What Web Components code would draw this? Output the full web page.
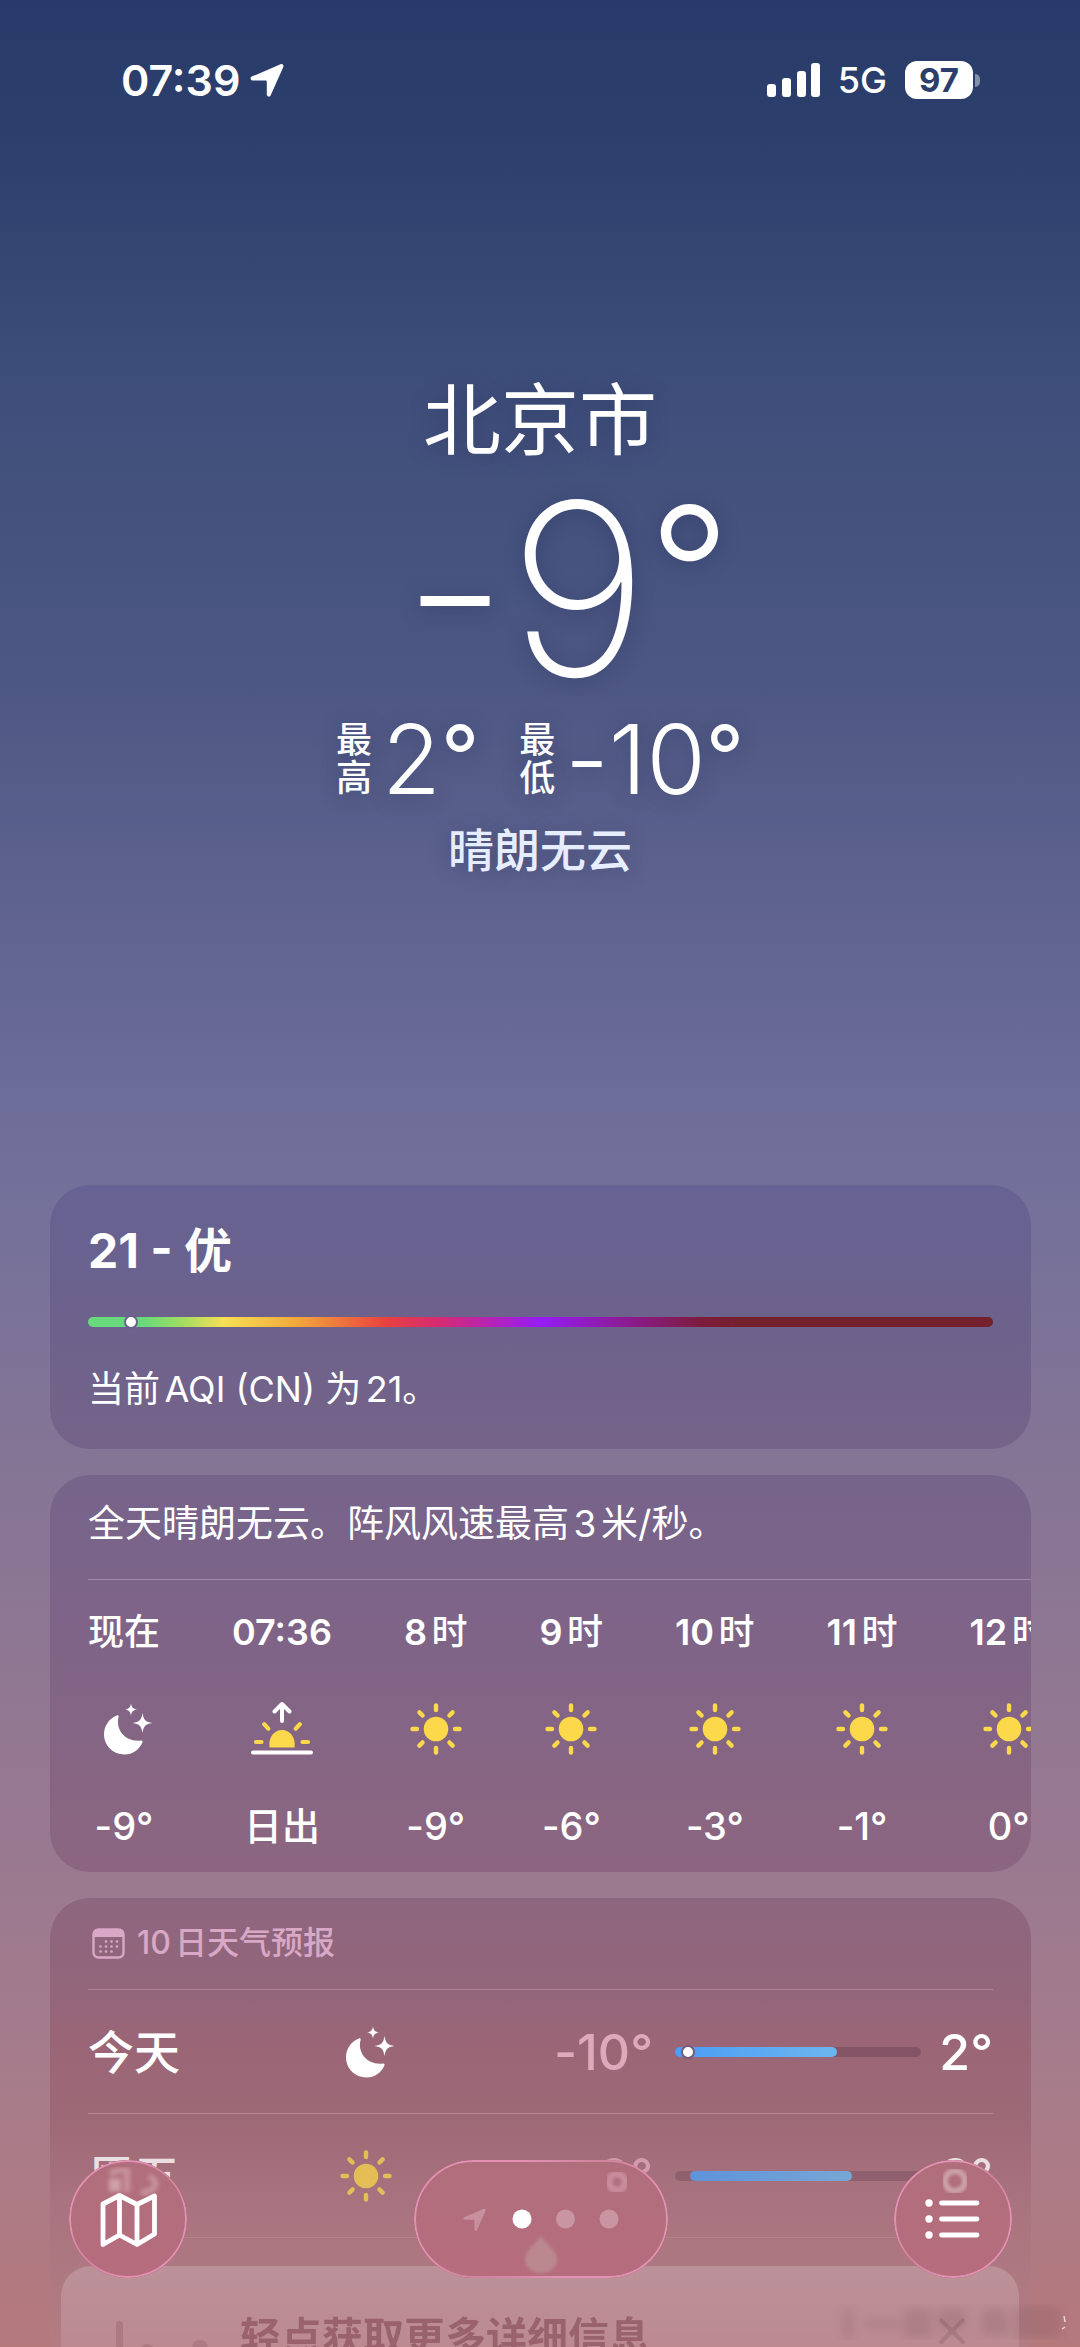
<!DOCTYPE html>
<html lang="zh-CN">
<head>
<meta charset="utf-8">
<meta name="viewport" content="width=device-width, initial-scale=1">
<title>天气</title>
<style>
html, body { margin: 0; height: 100%; }
body {
  overflow: hidden;
  color: #fff;
  font-family: Inter, "Noto Sans CJK SC", sans-serif;
  background: #283b69;
}
</style>
</head>
<body>
<weather-app></weather-app>
<script>
const define = (name, html, setup) => customElements.define(name, class extends HTMLElement {
  connectedCallback() {
    if (this.shadowRoot) return;
    const root = this.attachShadow({ mode: 'open' });
    root.innerHTML = html;
    if (setup) setup(this, root);
  }
});

const ARROW = '<path d="M30.5 1.2c1.8-.8 3.6.9 2.8 2.8L20.6 32.4c-.9 2-3.8 1.400-3.800-.800V18.800c0-.900-.500-1.400-1.400-1.400H2.600c-2.200 0-2.800-2.900-.800-3.800z"/>';
const rays = (a) => a.map(d => `<line x1="28" y1="4.500" x2="28" y2="9" transform="rotate(${d} 28 28)"/>`).join('');
const ICONS = {
  sun: `<svg viewBox="0 0 56 56"><circle cx="28" cy="28" r="12.300" fill="#fbd94b"/><g stroke="#fbd94b" stroke-width="4.400" stroke-linecap="round">${rays([0,45,90,135,180,225,270,315])}</g></svg>`,
  moon: `<svg viewBox="-4 0 56 56" fill="#fff"><path d="M17 14.500c1-.5 2 .3 1.600 1.500C15 29 26 41.500 41 39.500c1.200-.2 2 .9 1.400 1.900C39 49 32.500 53.400 24.500 53.400 13 53.400 4 44.500 4 33.200 4 25 9 17.500 17 14.500z"/><path d="M31 2.500c.8 4.200 1.800 5.200 6 6-4.200.8-5.200 1.800-6 6-.8-4.200-1.800-5.200-6-6 4.200-.8 5.200-1.800 6-6z"/><path d="M42.500 12c1.300 7.200 2.800 8.700 10 10-7.200 1.300-8.700 2.800-10 10-1.300-7.200-2.800-8.700-10-10 7.200-1.300 8.700-2.800 10-10z"/></svg>`,
  sunrise: `<svg viewBox="0 0 64 56"><path d="M19.500 46.500C18 36 24.500 29 32 29s14 7 12.500 17.500z" fill="#fbd94b"/><g stroke="#fbd94b" stroke-width="4.200" stroke-linecap="round"><path d="M6 41h5.500M52.500 41H58M14.200 23.200l4 4.500M49.800 23.200l-4 4.500"/></g><g stroke="#fff" stroke-width="4" stroke-linecap="round" stroke-linejoin="round" fill="none"><path d="M32 20V4M24.500 10.500L32 3l7.500 7.500M3 51.500h58"/></g></svg>`
};

define('weather-icon', `<style>
:host { display: block; width: 56px; height: 56px; }
:host([name=sunrise]) { width: 64px; }
svg { display: block; width: 100%; height: 100%; overflow: visible; }
</style>`, (el, root) => { root.innerHTML += ICONS[el.getAttribute('name')]; });

define('status-bar', `<style>
:host { display: flex; align-items: center; justify-content: space-between; height: 160px; padding: 0 100px 0 121px; box-sizing: border-box; }
.side { display: flex; align-items: center; }
time { font-size: 43px; font-weight: 600; line-height: 48px; }
.loc { width: 34px; height: 34px; margin-left: 10px; fill: #fff; }
.sig { width: 54px; height: 36px; margin-right: 17px; fill: #fff; }
.net { font-size: 36px; font-weight: 500; line-height: 48px; margin-right: 18px; }
.bat { width: 68px; height: 38px; border-radius: 12px; background: #fff; color: #2c3f6c; font-size: 33px; font-weight: 700; line-height: 38px; text-align: center; }
.tip { width: 5px; height: 13px; margin-left: 2px; border-radius: 0 6px 6px 0; background: #8390ac; }
</style>
<div class="side"><time>07:39</time><svg class="loc" viewBox="0 0 34 34">${ARROW}</svg></div>
<div class="side">
<svg class="sig" viewBox="0 0 54 36"><rect y="22" width="9" height="13" rx="3"/><rect x="15" y="16" width="9" height="19" rx="3"/><rect x="30" y="9" width="9" height="26" rx="3"/><rect x="44" y="1" width="9" height="34" rx="3"/></svg>
<span class="net">5G</span><span class="bat">97</span><span class="tip"></span></div>`);

define('current-weather', `<style>
:host { display: flex; flex-direction: column; align-items: center; padding-top: 213px; height: 812px; text-shadow: 0 3px 20px rgba(30,40,80,.35); font-feature-settings: "calt" 0; }
h1 { margin: 0; font-size: 78px; font-weight: 400; line-height: 96px; }
.now { font-size: 240px; font-weight: 250; line-height: 240px; padding-left: 52px; }
.now small { font-size: 180px; font-weight: 300; line-height: 0; vertical-align: 40px; }
.range { display: flex; gap: 40px; margin-top: 2px; }
.pair { display: flex; align-items: center; gap: 10px; }
.lab { width: 36px; font-size: 36px; font-weight: 500; line-height: 38px; }
.deg { font-size: 96px; font-weight: 300; line-height: 96px; }
.deg small { font-size: 84px; font-weight: 400; line-height: 0; vertical-align: 8px; }
.cond { margin: 15px 0 0; font-size: 46px; font-weight: 500; line-height: 56px; color: #e6edff; }
</style>
<h1>北京市</h1>
<div class="now">-9<small>°</small></div>
<div class="range">
<div class="pair"><span class="lab">最高</span><span class="deg">2<small>°</small></span></div>
<div class="pair"><span class="lab">最低</span><span class="deg">-10<small>°</small></span></div>
</div>
<p class="cond">晴朗无云</p>`);

define('air-card', `<style>
:host { display: block; padding: 36px 38px; border-radius: 40px; background: linear-gradient(#666293, #6c628c 50%, #766389); }
h2 { margin: 0 0 36px; font-size: 48px; font-weight: 700; line-height: 60px; }
.scale { position: relative; height: 10px; border-radius: 5px; background: linear-gradient(90deg, #68d97c 0%, #68d97c 6%, #9add63 10%, #f8df55 15%, #f2a93c 23%, #e9403f 33%, #d62a75 39%, #951df5 50%, #8b1b8d 60%, #7c1c3a 68%, #74202d 72%, #74202d 100%); }
.scale i { position: absolute; left: 4%; top: -2px; width: 10px; height: 10px; border: 2px solid #67618e; border-radius: 50%; background: #fff; }
p { margin: 38px 0 0; font-size: 36px; line-height: 48px; text-autospace: normal; }
</style>
<h2>21 - 优</h2><div class="scale"><i></i></div><p>当前AQI (CN) 为21。</p>`);

define('hour-item', `<style>
:host { display: flex; flex-direction: column; align-items: center; flex: none; gap: 45px; line-height: 48px; white-space: nowrap; }
.t { font-size: 36px; font-weight: 600; text-autospace: normal; }
.t span { font-weight: 500; }
.v { font-size: 38px; font-weight: 500; font-feature-settings: "calt" 0; }
</style><span class="t"></span><slot></slot><span class="v"></span>`, (el, root) => {
  root.querySelector('.t').innerHTML = el.getAttribute('time').replace(/[^\d:]+/, m => `<span>${m}</span>`);
  root.querySelector('.v').textContent = el.getAttribute('value');
});

define('hourly-card', `<style>
:host { display: block; padding: 25px 0 22px 38px; border-radius: 40px; overflow: hidden; background: linear-gradient(#76648b, #7f6487 40%, #8c6680); }
p { margin: 0 0 31px; font-size: 37px; line-height: 48px; text-autospace: normal; }
.row { display: flex; gap: 72px; padding-top: 28px; border-top: 1px solid rgba(255,235,255,.27); }
</style>
<p>全天晴朗无云。阵风风速最高3米/秒。</p>
<div class="row">
<hour-item time="现在" value="-9°"><weather-icon name="moon"></weather-icon></hour-item>
<hour-item time="07:36" value="日出"><weather-icon name="sunrise"></weather-icon></hour-item>
<hour-item time="8时" value="-9°"><weather-icon name="sun"></weather-icon></hour-item>
<hour-item time="9时" value="-6°"><weather-icon name="sun"></weather-icon></hour-item>
<hour-item time="10时" value="-3°"><weather-icon name="sun"></weather-icon></hour-item>
<hour-item time="11时" value="-1°"><weather-icon name="sun"></weather-icon></hour-item>
<hour-item time="12时" value="0°"><weather-icon name="sun"></weather-icon></hour-item>
</div>`);

define('day-row', `<style>
:host { display: grid; grid-template-columns: 250px 56px 1fr 246px 72px; align-items: center; height: 123px; border-top: 1px solid rgba(255,225,240,.25); font-size: 50px; font-weight: 500; line-height: 60px; font-feature-settings: "calt" 0; }
:host([dim]) > *, :host([dim]) ::slotted(*) { opacity: .74; }
.day { font-size: 46px; }
.lo { text-align: right; color: #dfa9bc; margin-right: 22px; }
.hi { white-space: nowrap; justify-self: end; }
.bar { position: relative; height: 10px; border-radius: 5px; background: rgba(70,40,60,.28); }
.fill { position: absolute; top: 0; bottom: 0; border-radius: 5px; background: linear-gradient(90deg, #4b9df6, #6cb6ee); }
:host([dim]) .day, :host([dim]) .lo, :host([dim]) .bar, :host([dim]) .hi { opacity: .78; }
.dot { position: absolute; left: 6px; top: -2px; width: 10px; height: 10px; border: 2px solid #7a5a78; border-radius: 50%; background: #fff; }
</style><span class="day"></span><slot></slot><span class="lo"></span><div class="bar"><div class="fill"></div></div><span class="hi"></span>`, (el, root) => {
  const get = n => el.getAttribute(n);
  root.querySelector('.day').textContent = get('day');
  root.querySelector('.lo').textContent = get('low');
  root.querySelector('.hi').textContent = get('high');
  const fill = root.querySelector('.fill');
  fill.style.left = get('from') + '%';
  fill.style.right = (100 - get('to')) + '%';
  if (el.hasAttribute('current')) {
    const dot = document.createElement('div');
    dot.className = 'dot';
    root.querySelector('.bar').append(dot);
  }
});

define('daily-card', `<style>
:host { display: block; padding: 25px 38px 40px; border-radius: 40px; background: linear-gradient(#8d667f 0, #93667b 90px, #9a6677 140px, #9e6976 220px, #a8737f 300px, #b07a82 400px, #b47c82 460px); }
h2 { display: flex; align-items: center; gap: 12px; margin: 0 0 26px; padding-left: 4px; font-size: 32px; font-weight: 500; line-height: 40px; color: #d9a8c6; text-autospace: normal; }
svg { width: 33px; height: 31px; }
.end { border-top: 1px solid rgba(255,225,240,.1); height: 124px; }
</style>
<h2><svg viewBox="0 0 33 31"><rect x="1.500" y="1.500" width="30" height="28" rx="5" fill="none" stroke="#d9a8c6" stroke-width="2.400"/><path d="M1 9V6.500Q1 1 6.500 1h20Q32 1 32 6.500V9z" fill="#d9a8c6"/><g fill="#d9a8c6"><circle cx="14" cy="13.500" r="1.300"/><circle cx="19.500" cy="13.500" r="1.300"/><circle cx="25" cy="13.500" r="1.300"/><circle cx="8.500" cy="18.500" r="1.300"/><circle cx="14" cy="18.500" r="1.300"/><circle cx="19.500" cy="18.500" r="1.300"/><circle cx="25" cy="18.500" r="1.300"/><circle cx="8.500" cy="23.500" r="1.300"/><circle cx="14" cy="23.500" r="1.300"/><circle cx="19.500" cy="23.500" r="1.300"/></g></svg><span>10日天气预报</span></h2>
<day-row day="今天" low="-10°" high="2°" from="0" to="66" current><weather-icon name="moon"></weather-icon></day-row>
<day-row day="周五" low="-9°" high="3°" from="6" to="72" dim><weather-icon name="sun"></weather-icon></day-row>
<div class="end"></div>`);

define('tip-banner', `<style>
:host { position: fixed; left: 61px; right: 61px; bottom: -59px; height: 140px; box-sizing: border-box; padding: 46px 52px 0 48px; display: flex; align-items: flex-start; border-radius: 30px; background: linear-gradient(rgba(187,146,153,.98), rgba(188,138,145,.98) 81px); color: #99626d; }
.pic { width: 110px; height: 60px; margin: 6px 21px 0 0; }
.text { flex: 1; font-size: 41px; font-weight: 700; line-height: 50px; white-space: nowrap; }
button { border: 0; padding: 0; margin-top: 4px; background: none; width: 30px; height: 30px; }
button svg { display: block; }
</style>
<svg class="pic" viewBox="0 0 110 60" fill="#ad7a84"><rect x="7" y="3" width="7" height="60" rx="3.500"/><circle cx="38" cy="33" r="7"/><circle cx="91" cy="30" r="8"/></svg>
<span class="text">轻点获取更多详细信息</span>
<button aria-label="关闭"><svg width="30" height="30" viewBox="0 0 30 30" stroke="#a97b84" stroke-width="4" stroke-linecap="round"><path d="M4 4l22 22M26 4L4 26"/></svg></button>`);

define('bottom-bar', `<style>
:host { position: fixed; left: 69px; right: 68px; bottom: 69px; display: flex; justify-content: space-between; }
button, nav { position: relative; box-sizing: border-box; height: 118px; border: 0; padding: 0; border-radius: 59px; overflow: hidden; background: linear-gradient(#b06e7c, #b66d7e); color: #fff; }
button::after, nav::after { content: ""; position: absolute; inset: 0; border-radius: 59px; border: 2px solid #e391b4; box-sizing: border-box; mask: linear-gradient(135deg, #000 30%, rgba(0,0,0,.6) 50%, #000 70%); }
button { width: 118px; }
nav { width: 254px; }
svg { display: block; }
</style>
<button aria-label="地图"><svg width="118" height="118" viewBox="0 0 118 118"><defs><filter id="b1"><feGaussianBlur stdDeviation="2.200"/></filter></defs>
<g filter="url(#b1)" fill="none" stroke="#cfa0a7" stroke-width="6"><path d="M41 14c7-5 14-4 20-3M58 12v20M80 16c10 6 9 14-8 17" opacity=".75"/><path d="M40 25h12" stroke-width="13"/></g>
<g fill="none" stroke="#fff" stroke-width="4.800" stroke-linejoin="round"><path d="M34 44L50.500 35.500l17.500 9 17.500-8.500V74L68 84.500 50.500 75 34 84.500zM50.500 36v39M68 45v39"/></g></svg></button>
<nav aria-label="位置"><svg width="254" height="118" viewBox="0 0 254 118"><defs><filter id="b2"><feGaussianBlur stdDeviation="1.800"/></filter></defs>
<path d="M127 76c-5 8-16 15-16 23a16 14 0 0 0 32 0c0-8-11-15-16-23z" fill="#bb8890" filter="url(#b2)"/>
<circle cx="203" cy="22" r="8" fill="none" stroke="#c98c9b" stroke-width="7" filter="url(#b2)"/>
<g transform="translate(49 48) scale(.68)" fill="#c8909e">${ARROW}</g>
<circle cx="108" cy="59" r="9.500" fill="#fff"/><circle cx="151.500" cy="59" r="9.500" fill="#c995a2"/><circle cx="195" cy="59" r="9.500" fill="#c995a2"/></svg></nav>
<button aria-label="列表"><svg width="118" height="118" viewBox="0 0 118 118"><defs><filter id="b3"><feGaussianBlur stdDeviation="1.800"/></filter></defs>
<circle cx="61" cy="21" r="10" fill="none" stroke="#cba0a7" stroke-width="6" filter="url(#b3)"/>
<g fill="#fff"><circle cx="35" cy="43" r="3.700"/><circle cx="35" cy="59" r="3.700"/><circle cx="35" cy="75" r="3.700"/></g>
<path d="M47.500 43h35.500M47.500 59h35.500M47.500 75h35.500" stroke="#fff" stroke-width="4.800" stroke-linecap="round"/></svg></button>`);

define('corner-haze', `<style>
:host { position: fixed; right: 12px; bottom: 4px; width: 240px; height: 40px; }
svg { display: block; }
</style>
<svg width="240" height="40" viewBox="0 0 240 40"><defs><filter id="h"><feGaussianBlur stdDeviation="5"/></filter></defs>
<g filter="url(#h)" fill="#80585f" opacity=".24"><rect x="16" y="6" width="8" height="28"/><rect x="36" y="18" width="36" height="6"/><rect x="76" y="6" width="28" height="28"/><rect x="110" y="6" width="28" height="20"/><rect x="154" y="6" width="26" height="26"/><rect x="186" y="4" width="46" height="30"/></g>
<path d="M236 13l1 6M234 26l3-2" stroke="#fff" stroke-width="1.500" opacity=".7"/></svg>`);

define('weather-app', `<style>
:host { display: block; height: 100%; overflow: hidden; background: linear-gradient(#273a69 0%, #2e406d 7%, #3d4d79 15.500%, #4d5783 29%, #5e628f 38%, #71709b 49.500%, #857595 62.500%, #997990 79%, #a67c8b 88%, #b07a82 96%, #b5797c 100%); }
main { display: flex; flex-direction: column; gap: 26px; padding: 0 49px 0 50px; }
</style>
<status-bar></status-bar>
<current-weather></current-weather>
<main><air-card></air-card><hourly-card></hourly-card><daily-card></daily-card></main>
<tip-banner></tip-banner>
<corner-haze></corner-haze>
<bottom-bar></bottom-bar>`);
</script>
</body>
</html>
